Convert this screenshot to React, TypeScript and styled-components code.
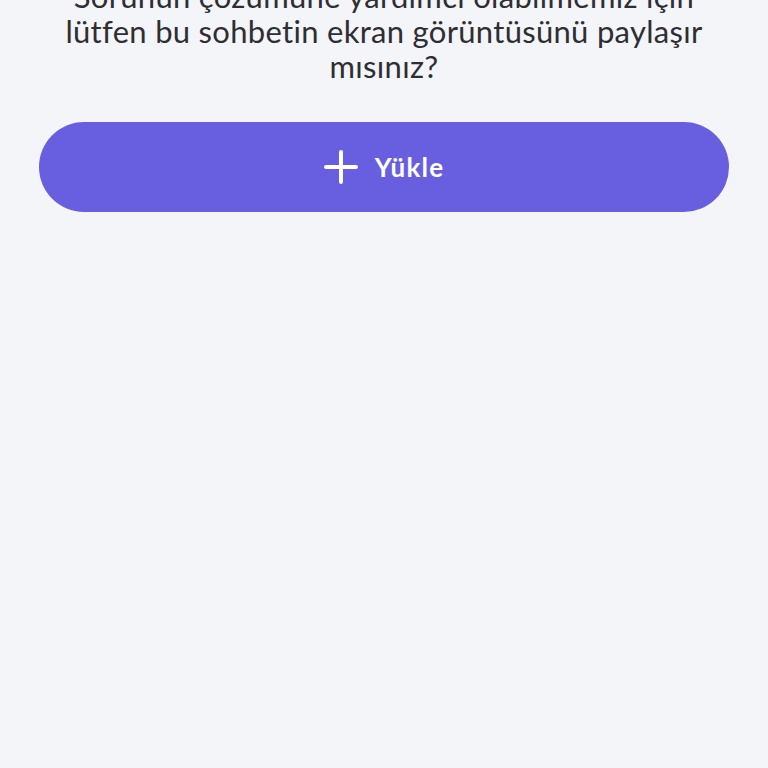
import React from 'react';
import styled, { createGlobalStyle } from 'styled-components';

const GlobalStyle = createGlobalStyle`
  html, body {
    margin: 0;
    padding: 0;
    background: #f3f5f9;
    font-family: "Lato", "Noto Sans", sans-serif;
  }
`;

const Page = styled.main`
  width: 768px;
  height: 768px;
  overflow: hidden;
  background: #f3f5f9;
  display: flex;
  flex-direction: column;
  padding: 0 39px;
  box-sizing: border-box;
`;

const Message = styled.p`
  margin: -21px 0 0;
  text-align: center;
  font-size: 31px;
  line-height: 35px;
  letter-spacing: 0.3px;
  color: #2e2e33;
  font-weight: 400;
`;

const UploadButton = styled.button`
  margin-top: 38px;
  height: 90px;
  width: 100%;
  border: none;
  border-radius: 45px;
  background: #675ee0;
  color: #ffffff;
  font-family: inherit;
  font-size: 26px;
  letter-spacing: 1.2px;
  font-weight: 700;
  display: flex;
  align-items: center;
  justify-content: center;
  gap: 17px;
  cursor: pointer;
`;

const PlusIcon = () => (
  <svg width="34" height="34" viewBox="0 0 34 34" fill="none">
    <path d="M17 2v30M2 17h30" stroke="#fff" strokeWidth="4" strokeLinecap="round" />
  </svg>
);

const App: React.FC = () => {
  return (
    <>
      <GlobalStyle />
      <Page>
        <Message>
          Sorunun çözümüne yardımcı olabilmemiz için
          <br />
          lütfen bu sohbetin ekran görüntüsünü paylaşır
          <br />
          mısınız?
        </Message>
        <UploadButton>
          <PlusIcon />
          Yükle
        </UploadButton>
      </Page>
    </>
  );
};

export default App;
